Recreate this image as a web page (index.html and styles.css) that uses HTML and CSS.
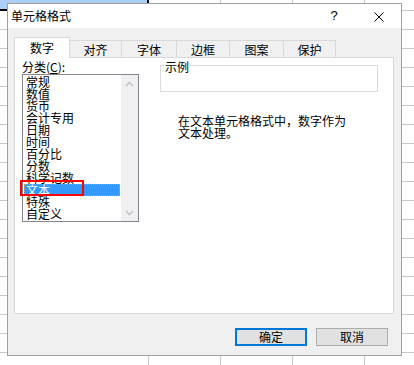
FILE: index.html
```html
<!DOCTYPE html>
<html lang="zh-CN">
<head>
<meta charset="utf-8">
<title>单元格格式</title>
<link rel="stylesheet" href="styles.css">
</head>
<body>
<div class="dialog">
  <div class="titlebar">
    <span class="title">单元格格式</span>
    <span class="help">?</span>
    <svg class="close" width="10" height="10" viewBox="0 0 10 10"><path d="M0.5 0.5 L9.5 9.5 M9.5 0.5 L0.5 9.5" stroke="#000" stroke-width="1" fill="none"/></svg>
  </div>
  <div class="body">
    <div class="tabs">
      <div class="tab tab-active w56">数字</div>
      <div class="tab w52">对齐</div>
      <div class="tab w55">字体</div>
      <div class="tab w53">边框</div>
      <div class="tab w54">图案</div>
      <div class="tab w52">保护</div>
    </div>
    <div class="panel">
      <div class="leftcol">
        <div class="label">分类(<u>C</u>):</div>
        <div class="listbox">
          <div class="items">
            <div class="item">常规</div>
            <div class="item">数值</div>
            <div class="item">货币</div>
            <div class="item">会计专用</div>
            <div class="item">日期</div>
            <div class="item">时间</div>
            <div class="item">百分比</div>
            <div class="item">分数</div>
            <div class="item">科学记数</div>
            <div class="item item-selected">文本</div>
            <div class="item">特殊</div>
            <div class="item">自定义</div>
          </div>
          <div class="scrollbar">
            <div class="arrow"><svg width="9" height="6" viewBox="0 0 9 6"><path d="M1 5 L4.5 1.5 L8 5" stroke="#c4c4c4" stroke-width="1.6" fill="none"/></svg></div>
            <div class="arrow"><svg width="9" height="6" viewBox="0 0 9 6"><path d="M1 1 L4.5 4.5 L8 1" stroke="#c4c4c4" stroke-width="1.6" fill="none"/></svg></div>
          </div>
          <div class="annot"></div>
        </div>
      </div>
      <div class="rightcol">
        <div class="sample"><span class="legend">示例</span></div>
        <div class="desc">在文本单元格格式中，数字作为<br>文本处理。</div>
      </div>
    </div>
    <div class="buttons">
      <div class="btn btn-default">确定</div>
      <div class="btn">取消</div>
    </div>
  </div>
</div>
</body>
</html>
```
FILE: styles.css
```css
html, body {
  margin: 0;
  padding: 0;
}
body {
  width: 414px;
  height: 365px;
  overflow: hidden;
  background-color: #fff;
  background-image:
    linear-gradient(#000, #000),
    linear-gradient(#000, #000),
    linear-gradient(#aecff5, #aecff5),
    linear-gradient(to right, transparent 148px, #c8c8c8 148px 149px, transparent 149px 220px, #c8c8c8 220px 221px, transparent 221px 292px, #c8c8c8 292px 293px, transparent 293px 364px, #c8c8c8 364px 365px, transparent 365px),
    linear-gradient(#c8c8c8 0 1px, transparent 1px);
  background-size: 148px 2px, 2px 11px, 147px 9px, 100% 100%, 100% 19px;
  background-position: 0 9px, 147px 0, 0 0, 0 0, 0 10px;
  background-repeat: no-repeat, no-repeat, no-repeat, no-repeat, repeat;
  font-family: "Noto Sans CJK SC", "Noto Sans", sans-serif;
}
.dialog {
  position: relative;
  margin: 3px 0 0 7px;
  width: 395px;
  height: 353px;
  box-sizing: border-box;
  border: 1px solid #a0a0a0;
  background: #f0f0f0;
  display: flex;
  flex-direction: column;
  font-size: 12px;
  line-height: 12px;
  color: #000;
}
.titlebar {
  height: 24px;
  background: #fff;
  display: flex;
  align-items: center;
  padding-left: 3px;
  flex: none;
}
.title {
  line-height: 12px;
}
.help {
  margin-left: auto;
  width: 10px;
  text-align: center;
  font-family: "Liberation Sans", sans-serif;
  font-size: 13px;
  line-height: 14px;
}
.close {
  margin-left: 35px;
  margin-right: 17px;
  margin-top: 2px;
  display: block;
}
.body {
  flex: 1;
  padding: 9px 0 0 6px;
  display: flex;
  flex-direction: column;
}
.tabs {
  display: flex;
  align-items: flex-end;
  height: 20px;
}
.tab {
  height: 17px;
  box-sizing: border-box;
  border-top: 1px solid #d9d9d9;
  border-right: 1px solid #d9d9d9;
  background: #f0f0f0;
  text-align: center;
  padding-top: 3px;
  line-height: 12px;
}
.tab-active {
  height: 21px;
  margin-bottom: -1px;
  border-left: 1px solid #d9d9d9;
  background: #fff;
  position: relative;
  z-index: 1;
  padding-top: 4px;
}
.w56 { width: 56px; }
.w52 { width: 52px; }
.w55 { width: 55px; }
.w53 { width: 53px; }
.w54 { width: 54px; }
.panel {
  width: 380px;
  height: 257px;
  box-sizing: border-box;
  border: 1px solid #d9d9d9;
  background: #fff;
  display: flex;
  padding: 3px 0 0 7px;
}
.leftcol {
  width: 117px;
  flex: none;
}
.label {
  height: 12px;
  line-height: 12px;
}
.listbox {
  position: relative;
  margin-top: 1px;
  width: 117px;
  height: 148px;
  box-sizing: border-box;
  border: 1px solid #828790;
  display: flex;
}
.items {
  flex: 1;
  padding: 1px 0;
}
.item {
  margin: 0 1px;
  height: 12px;
  line-height: 12px;
  padding-left: 2px;
  white-space: nowrap;
  box-sizing: border-box;
}
.item-selected {
  background: #3399ff;
  color: #fff;
  outline: 1px dotted #d99a4e;
  outline-offset: -1px;
}
.scrollbar {
  width: 17px;
  background: #f0f0f0;
  display: flex;
  flex-direction: column;
  justify-content: space-between;
}
.arrow {
  height: 17px;
  display: flex;
  align-items: center;
  justify-content: center;
}
.arrow svg {
  display: block;
}
.annot {
  position: absolute;
  left: -3px;
  top: 105px;
  width: 64px;
  height: 16px;
  box-sizing: border-box;
  border: 2px solid #ff0000;
}
.rightcol {
  margin-left: 21px;
  width: 218px;
}
.sample {
  position: relative;
  margin-top: 4px;
  height: 27px;
  box-sizing: border-box;
  border: 1px solid #dcdcdc;
}
.legend {
  position: absolute;
  left: 3px;
  top: -5px;
  padding: 0 1px;
  background: #fff;
  line-height: 12px;
}
.desc {
  margin: 23px 0 0 18px;
  line-height: 12px;
}
.buttons {
  margin-top: 14px;
  padding-right: 13px;
  display: flex;
  justify-content: flex-end;
  gap: 9px;
}
.btn {
  width: 72px;
  height: 18px;
  box-sizing: border-box;
  border: 1px solid #adadad;
  background: #e1e1e1;
  display: flex;
  align-items: center;
  justify-content: center;
  line-height: 12px;
}
.btn-default {
  border: 2px solid #0078d7;
}
```
